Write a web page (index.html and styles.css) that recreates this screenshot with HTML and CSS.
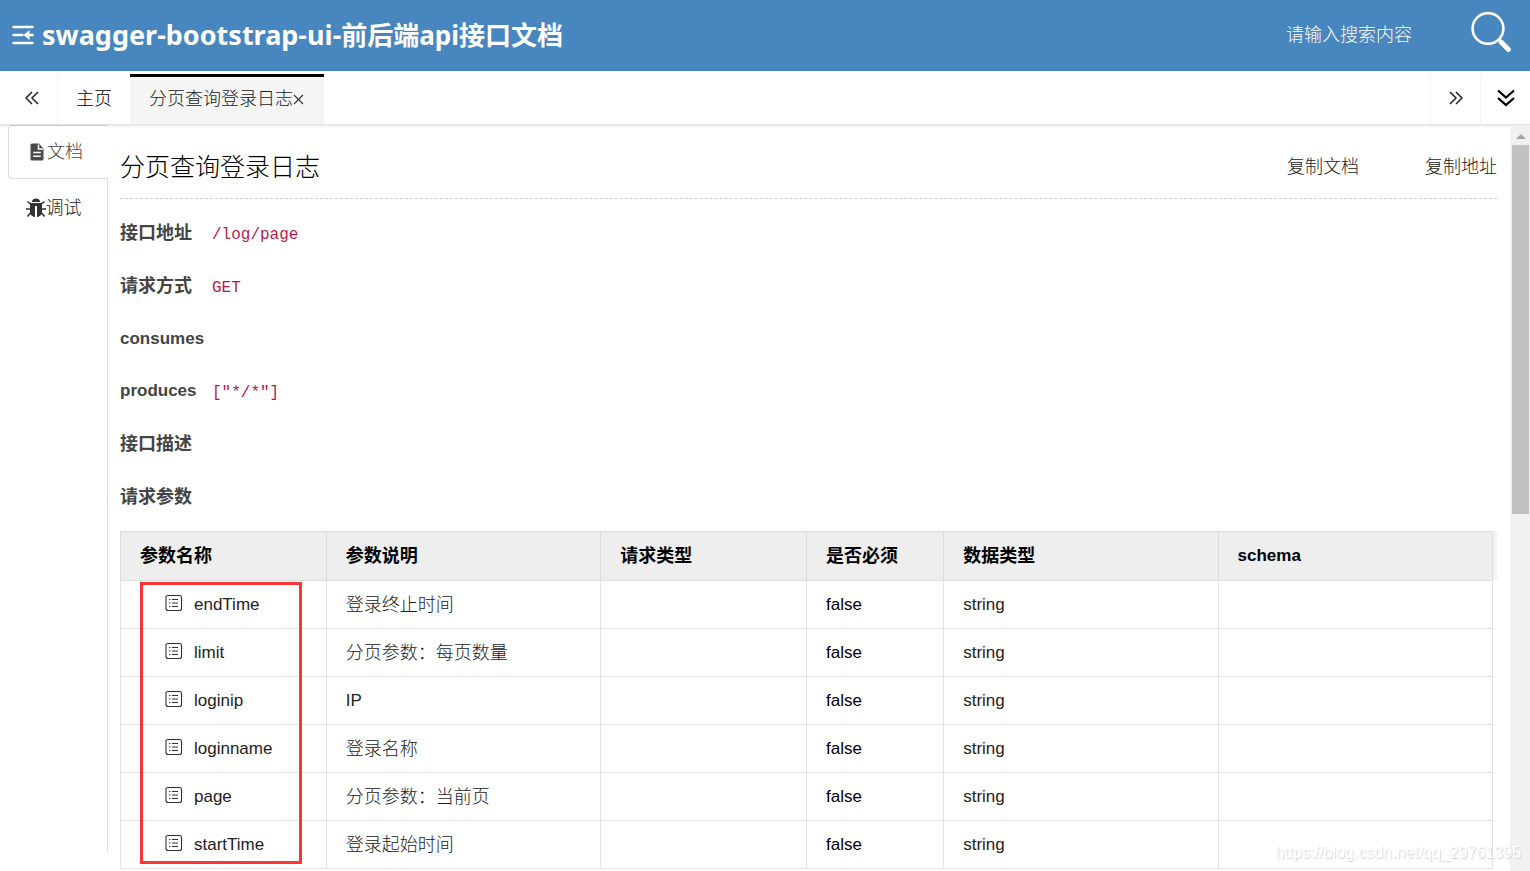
FILE: index.html
```
<!DOCTYPE html>
<html lang="zh-CN">
<head>
<meta charset="utf-8">
<title>swagger-bootstrap-ui-前后端api接口文档</title>
<link rel="stylesheet" href="styles.css">
</head>
<body>
<svg class="defs" width="0" height="0" aria-hidden="true">
  <symbol id="list" viewBox="0 0 18 18">
    <rect x="1" y="1.500" width="15.500" height="15" rx="2" fill="none" stroke="#333" stroke-width="1.100"/>
    <path d="M7 5.500h6M7 9h6M7 12.500h6M4 5.500h1.400M4 9h1.400M4 12.500h1.400" stroke="#333" stroke-width="1.100"/>
  </symbol>
</svg>
<header class="topbar">
  <button class="menu" aria-label="收起菜单"><svg width="22" height="20" viewBox="0 0 22 20"><path d="M1.500 2h19M1.500 10h9M1.500 18h19" fill="none" stroke="#fff" stroke-width="2.400" stroke-linecap="round"/><path d="M11.500 10l6-5v3.800h4v2.400h-4V15z" fill="#fff"/></svg></button>
  <h1 class="brand"><span class="product">swagger-bootstrap-ui-</span>前后端api接口文档</h1>
  <input class="search" type="text" placeholder="请输入搜索内容" aria-label="搜索">
  <button class="search-btn" aria-label="搜索"><svg width="42" height="42" viewBox="0 0 42 42" fill="none" stroke="#fff" stroke-linecap="round"><circle cx="18" cy="17.500" r="15.400" stroke-width="2.600"/><path d="M29 28.500l1.500 1.500" stroke-width="3"/><path d="M31 31l7.500 7.500" stroke-width="4.800"/></svg></button>
</header>
<nav class="tabs">
  <button class="nav-btn first" aria-label="向左"><svg width="14" height="14" viewBox="0 0 14 14"><path d="M7 1L1 7l6 6M13 1L7 7l6 6"/></svg></button>
  <button class="tab">主页</button>
  <div class="tab active"><span>分页查询登录日志</span><button class="close" aria-label="关闭"><svg width="11" height="11" viewBox="0 0 11 11"><path d="M1 1l9 9M10 1l-9 9"/></svg></button></div>
  <button class="nav-btn push" aria-label="向右"><svg width="14" height="14" viewBox="0 0 14 14"><path d="M1 1l6 6-6 6M7 1l6 6-6 6"/></svg></button>
  <button class="nav-btn more" aria-label="更多"><svg width="18" height="18" viewBox="0 0 18 18"><path d="M1 1.500l8 7 8-7M1 9l8 7 8-7"/></svg></button>
</nav>
<div class="body">
  <aside class="side">
    <button class="side-tab current"><svg width="14" height="18" viewBox="0 0 14 18"><path d="M2 .5h7L13.500 5.500V16a1.500 1.500 0 0 1-1.500 1.500H2A1.500 1.500 0 0 1 .5 16V2A1.500 1.500 0 0 1 2 .5z" fill="#4a4a4a"/><path d="M8.500 1.500v4.500H13M3.200 9.500h7.600M3.200 13.200h7.600" fill="none" stroke="#fff" stroke-width="1.500"/></svg>文档</button>
    <button class="side-tab debug"><svg width="20" height="20" viewBox="0 0 20 20"><path d="M6 4a4 3.500 0 0 1 8 0zM4 5h12v9c0 2.500-2.500 5-5 5V8H9v11c-2.500 0-5-2.500-5-5z" fill="#333"/><path d="M5 6.500L1.500 3.500M15 6.500l3.500-3M5 11H0M15 11h5M5 14.500L1.500 18.500M15 14.500l3.500 4" fill="none" stroke="#333" stroke-width="1.600"/></svg>调试</button>
  </aside>
  <main class="content">
    <div class="title-row">
      <h2 class="title">分页查询登录日志</h2>
      <div class="actions"><button>复制文档</button><button>复制地址</button></div>
    </div>
    <dl class="info">
      <div class="item"><dt>接口地址</dt><dd><code>/log/page</code></dd></div>
      <div class="item"><dt>请求方式</dt><dd><code>GET</code></dd></div>
      <div class="item"><dt class="latin">consumes</dt><dd></dd></div>
      <div class="item"><dt class="latin">produces</dt><dd><code>["*/*"]</code></dd></div>
      <div class="item"><dt>接口描述</dt><dd></dd></div>
      <div class="item"><dt>请求参数</dt><dd></dd></div>
    </dl>
    <div class="table-box">
      <table class="params">
        <colgroup><col class="w15"><col class="w20"><col class="w15"><col class="w10"><col class="w20"><col class="w20"></colgroup>
        <thead><tr><th>参数名称</th><th>参数说明</th><th>请求类型</th><th>是否必须</th><th>数据类型</th><th class="latin">schema</th></tr></thead>
        <tbody>
          <tr><td class="name"><svg><use href="#list"/></svg>endTime</td><td>登录终止时间</td><td></td><td class="latin dark">false</td><td class="latin">string</td><td></td></tr>
          <tr><td class="name"><svg><use href="#list"/></svg>limit</td><td>分页参数：每页数量</td><td></td><td class="latin dark">false</td><td class="latin">string</td><td></td></tr>
          <tr><td class="name"><svg><use href="#list"/></svg>loginip</td><td class="latin">IP</td><td></td><td class="latin dark">false</td><td class="latin">string</td><td></td></tr>
          <tr><td class="name"><svg><use href="#list"/></svg>loginname</td><td>登录名称</td><td></td><td class="latin dark">false</td><td class="latin">string</td><td></td></tr>
          <tr><td class="name"><svg><use href="#list"/></svg>page</td><td>分页参数：当前页</td><td></td><td class="latin dark">false</td><td class="latin">string</td><td></td></tr>
          <tr><td class="name"><svg><use href="#list"/></svg>startTime</td><td>登录起始时间</td><td></td><td class="latin dark">false</td><td class="latin">string</td><td></td></tr>
        </tbody>
      </table>
      <div class="marker"></div>
    </div>
  </main>
  <div class="scrollbar"><svg class="arrow" width="10" height="5" viewBox="0 0 10 5"><path d="M0 5l5-5 5 5z" fill="#a3a3a3"/></svg><div class="thumb"></div></div>
</div>
<div class="watermark">https://blog.csdn.net/qq_29761395</div>
</body>
</html>
```
FILE: styles.css
```
* { box-sizing: border-box; }
body {
  margin: 0;
  height: 100vh;
  overflow: hidden;
  display: flex;
  flex-direction: column;
  background: #fff;
  color: #222;
  font: 300 18px/24px "Liberation Sans", "Noto Sans CJK SC", sans-serif;
}
button { border: 0; padding: 0; background: none; color: inherit; font: inherit; display: flex; align-items: center; justify-content: center; }
h1, h2, dl, dd { margin: 0; }
.defs { position: absolute; }

.topbar { flex: none; height: 71px; display: flex; align-items: center; padding: 0 18px 2px 12px; background: #4786be; color: #fff; }
.brand { margin-left: 8px; font: 700 26px/36px "Noto Sans", "Noto Sans CJK SC", sans-serif; white-space: nowrap; }
.product { font-size: 27px; }
.search { margin-left: auto; width: 184px; height: 40px; padding: 2px 0 0; border: 0; outline: 0; background: none; color: #fff; font: inherit; }
.search::placeholder { color: #fff; opacity: 1; }
.search-btn { padding-bottom: 6px; }

.tabs { flex: none; height: 54px; padding-top: 3px; display: flex; border-bottom: 1px solid #e2e2e2; box-shadow: 0 1px 3px rgba(0, 0, 0, .1); color: #000; }
.nav-btn { width: 50px; border-left: 1px solid #f2f2f2; padding-bottom: 2px; }
.nav-btn.first { width: 58px; padding-left: 6px; border-left: 0; border-right: 1px solid #f2f2f2; }
.nav-btn.push { margin-left: auto; }
.nav-btn svg { fill: none; stroke: #222; stroke-width: 1.5; }
.close svg { fill: none; stroke: #333; stroke-width: 1.1; }
.nav-btn.more svg { stroke: #000; stroke-width: 2.2; }
.tab { padding: 0 18px; display: flex; align-items: center; }
.tab.active { padding: 0 20px 3px 19px; border-top: 3px solid #000; background: #f5f5f5; color: #222; }

.body { flex: 1; min-height: 0; display: flex; }
.side { width: 100px; margin: 0 0 19px 8px; display: flex; flex-direction: column; border-right: 1px solid #ddd; }
.side-tab { height: 54px; }
.side-tab.current { width: 100px; padding-right: 4px; gap: 3px; color: #444; background: #fff; border: 1px solid #ddd; border-right: 0; border-top-color: #ccc; border-radius: 4px 0 0 4px; }
.side-tab.debug { padding: 4px 8px 0 0; }

.content { flex: 1; min-width: 0; overflow: hidden; padding: 0 13px 0 12px; }
.title-row { height: 74px; padding-top: 10px; display: flex; align-items: center; justify-content: space-between; border-bottom: 1px dashed #ccc; }
.title { font-size: 25px; line-height: 36px; font-weight: 300; color: #000; }
.actions { display: flex; gap: 66px; }
.info { padding-top: 8px; display: grid; grid-auto-rows: 1fr; height: 324px; }
.item { display: flex; align-items: center; color: #444; }
dt { min-width: 92px; font-weight: 700; }
dd { padding-top: 2px; }
code { color: #b5194a; font: 16px/24px "Liberation Mono", monospace; }
.latin { font-size: 17px; }

.table-box { position: relative; margin-top: 8px; background: linear-gradient(#f2f2f2, #f2f2f2) top / 100% 49px no-repeat; padding-right: 4px; }
.params { width: 100%; table-layout: fixed; border-collapse: collapse; background: #fff; }
.w10 { width: 10%; }
.w15 { width: 15%; }
.w20 { width: 20%; }
.params th, .params td { height: 48px; padding: 0 19px; border: 1px solid #e2e2e2; text-align: left; font-weight: 300; }
.params th { height: 49px; background: #eee; border-color: #ddd; color: #000; font-weight: 700; }
.params .name { padding-left: 44px; font-size: 17px; }
.name svg { width: 18px; height: 18px; margin-right: 11px; vertical-align: -2px; }
.params .dark { color: #000; }
.marker { position: absolute; left: 20px; top: 51px; width: 162px; height: 282px; border: 3px solid #fa3535; }

.scrollbar { width: 20px; padding: 9px 1px 0 2px; background: #f1f1f1; }
.arrow { display: block; margin: 0 auto 6px; }
.thumb { height: 50%; background: #c1c1c1; }
.watermark { position: absolute; right: 9px; bottom: 6px; font-size: 16px; color: #fff; text-shadow: 1px 1px 1px #d4d4d4; }
```
